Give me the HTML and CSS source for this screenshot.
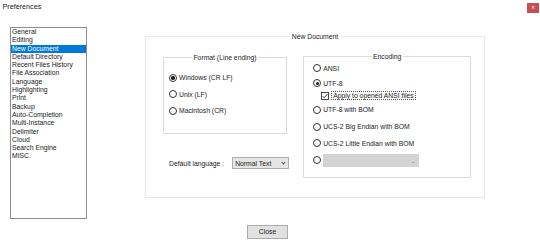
FILE: index.html
```html
<!DOCTYPE html>
<html lang="en">
<head>
    <meta charset="UTF-8">
    <meta name="viewport" content="width=device-width, initial-scale=1.0">
    <title>Preferences</title>
    <link rel="stylesheet" href="styles.css">
</head>
<body>
    <div class="titlebar">
        <div class="title">Preferences</div>
        <div class="close-x">&#x2715;</div>
    </div>
    <div class="main">
        <ul class="list">
            <li>General</li>
            <li>Editing</li>
            <li class="selected">New Document</li>
            <li>Default Directory</li>
            <li>Recent Files History</li>
            <li>File Association</li>
            <li>Language</li>
            <li>Highlighting</li>
            <li>Print</li>
            <li>Backup</li>
            <li>Auto-Completion</li>
            <li>Multi-Instance</li>
            <li>Delimiter</li>
            <li>Cloud</li>
            <li>Search Engine</li>
            <li>MISC.</li>
        </ul>
        <div class="group group--doc">
            <div class="group__title">New Document</div>
            <div class="doc__body">
                <div class="doc__left">
                    <div class="group group--format">
                        <div class="group__title">Format (Line ending)</div>
                        <div class="format__rows">
                            <div class="row"><span class="radio checked"></span>Windows (CR LF)</div>
                            <div class="row"><span class="radio"></span>Unix (LF)</div>
                            <div class="row"><span class="radio"></span>Macintosh (CR)</div>
                        </div>
                    </div>
                    <div class="lang">
                        <span class="lang__label">Default language :</span>
                        <div class="combo">Normal Text<span class="chev"></span></div>
                    </div>
                </div>
                <div class="group group--enc">
                    <div class="group__title">Encoding</div>
                    <div class="enc__rows">
                        <div class="row"><span class="radio"></span>ANSI</div>
                        <div class="row"><span class="radio checked"></span>UTF-8</div>
                        <div class="row row--check">
                            <svg class="check" viewBox="0 0 8 8" width="8" height="8">
                                <rect x="0.5" y="0.5" width="7" height="7" fill="#fff" stroke="#333" stroke-width="0.9"/>
                                <path d="M1.6 4.2 L3.2 5.8 L6.6 1.8" fill="none" stroke="#222" stroke-width="0.9"/>
                            </svg>
                            <span class="focus">Apply to opened ANSI files</span>
                        </div>
                        <div class="row"><span class="radio"></span>UTF-8 with BOM</div>
                        <div class="row"><span class="radio"></span>UCS-2 Big Endian with BOM</div>
                        <div class="row"><span class="radio"></span>UCS-2 Little Endian with BOM</div>
                        <div class="row"><span class="radio"></span><div class="combo combo--off"><span class="dash"></span></div></div>
                    </div>
                </div>
            </div>
        </div>
    </div>
    <div class="btn">Close</div>
</body>
</html>
```
FILE: styles.css
```css
* {
    box-sizing: border-box;
}
body {
    margin: 0;
    width: 540px;
    height: 246px;
    background-color: #fff;
    color: #222;
    font-family: "Liberation Sans", Arial, sans-serif;
    font-size: 6.8px;
    overflow: hidden;
}
.titlebar {
    display: flex;
    justify-content: space-between;
    height: 16px;
}
.title {
    padding-left: 2.5px;
    font-size: 7.2px;
    line-height: 14.5px;
}
.close-x {
    width: 12px;
    height: 9.5px;
    margin-top: 3.3px;
    margin-right: 0.7px;
    background-color: #c94f4f;
    color: #fff;
    font-size: 5px;
    line-height: 9.5px;
    text-align: center;
}
.main {
    display: flex;
    align-items: flex-start;
    padding-top: 11px;
}
.list {
    margin: 0 0 0 10px;
    padding: 0;
    width: 77px;
    height: 192px;
    border: 1px solid #8a8d94;
    list-style: none;
}
.list li {
    padding-left: 1px;
    line-height: 8.3px;
    white-space: nowrap;
}
.list li.selected {
    background-color: #0078d7;
    color: #fff;
}
.group {
    border: 1px solid #dcdcdc;
}
.group__title {
    display: table;
    margin: -4.5px auto 0;
    padding: 0 1.5px;
    background-color: #fff;
    line-height: 8px;
}
.group--doc {
    flex: 0 0 340px;
    margin: 9px 0 0 58px;
    height: 162px;
    border-color: #e8e8e8;
}
.doc__body {
    display: flex;
    align-items: flex-start;
    padding-left: 17px;
}
.doc__left {
    flex: 0 0 124px;
}
.group--format {
    margin-top: 16.5px;
    width: 124px;
    height: 77px;
}
.format__rows {
    padding: 8px 0 0 5px;
}
.format__rows .row {
    height: 16.5px;
}
.row {
    display: flex;
    align-items: center;
    height: 12px;
    white-space: nowrap;
}
.radio {
    flex: 0 0 8px;
    height: 8px;
    margin-right: 2px;
    border: 0.9px solid #333;
    border-radius: 50%;
    background-color: #fff;
    position: relative;
}
.radio.checked::after {
    content: "";
    position: absolute;
    left: 1.4px;
    top: 1.4px;
    width: 3.6px;
    height: 3.6px;
    border-radius: 50%;
    background-color: #1a1a1a;
}
.lang {
    display: flex;
    align-items: center;
    margin: 23px 0 0 6px;
    white-space: nowrap;
}
.lang__label {
    margin-right: 8px;
}
.combo {
    display: flex;
    flex: 0 0 57px;
    align-items: center;
    justify-content: space-between;
    height: 12px;
    padding: 0 3px 0 2px;
    border: 1px solid #adadad;
    background-color: #e5e5e5;
}
.chev {
    width: 3px;
    height: 3px;
    margin-top: -2px;
    border-right: 0.8px solid #555;
    border-bottom: 0.8px solid #555;
    transform: rotate(45deg);
}
.group--enc {
    flex: 0 0 168px;
    margin: 15.5px 0 0 14px;
    height: 122px;
}
.enc__rows {
    padding-left: 9px;
}
.enc__rows .row {
    margin-top: 4.6px;
}
.enc__rows .row:nth-child(1) {
    margin-top: 1.8px;
}
.enc__rows .row:nth-child(2) {
    margin-top: 3px;
}
.enc__rows .row:nth-child(3) {
    margin-top: 0.4px;
}
.enc__rows .row:nth-child(4) {
    margin-top: 2.3px;
}
.row--check {
    padding-left: 8px;
}
.check {
    flex: 0 0 8px;
    margin-right: 2px;
}
.focus {
    padding: 0 1px;
    border: 1px dotted #555;
    line-height: 7px;
}
.combo--off {
    flex: 0 0 96px;
    height: 13px;
    margin-top: 2px;
    border: none;
    background-color: #d3d3d3;
    justify-content: flex-end;
    padding-right: 5px;
}
.dash {
    width: 2.5px;
    height: 0.8px;
    margin-top: 3px;
    background-color: #a0a0a0;
}
.btn {
    width: 41px;
    height: 14px;
    margin: 6px 0 0 247px;
    border: 1px solid #adadad;
    background-color: #e1e1e1;
    line-height: 12px;
    text-align: center;
}
```
